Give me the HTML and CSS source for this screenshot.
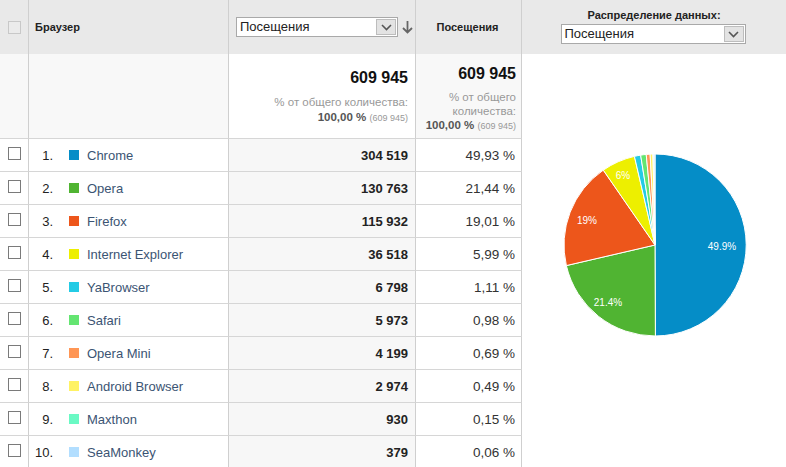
FILE: index.html
```html
<!DOCTYPE html>
<html lang="ru">
<head>
<meta charset="utf-8">
<link rel="stylesheet" href="styles.css">
</head>
<body>
<div class="report">
  <div class="table">
    <div class="cell hcheck"><span class="cb cb-head"></span></div>
    <div class="cell hname">Браузер</div>
    <div class="cell hvisits">
      <div class="select sel-metric"><span class="sel-text">Посещения</span><span class="sel-btn"><svg width="11" height="7" viewBox="0 0 11 7"><path d="M1 1 L5.5 5.5 L10 1" fill="none" stroke="#555" stroke-width="1.6"/></svg></span></div>
      <svg class="sort" width="11" height="13" viewBox="0 0 11 13"><path d="M5.5 0 V11 M1 7 L5.5 11.5 L10 7" fill="none" stroke="#666" stroke-width="1.8"/></svg>
    </div>
    <div class="cell hpct">Посещения</div>

    <div class="cell tcheck"></div>
    <div class="cell tname"></div>
    <div class="cell tvisits">
      <div class="big">609 945</div>
      <div class="sub">% от общего количества:</div>
      <div class="sub"><b>100,00 %</b> <small>(609 945)</small></div>
    </div>
    <div class="cell tpct">
      <div class="big">609 945</div>
      <div class="sub">% от общего количества:</div>
      <div class="sub"><b>100,00 %</b> <small>(609 945)</small></div>
    </div>

    <div class="cell rcheck"><span class="cb"></span></div>
    <div class="cell rname"><span class="num">1.</span><span class="sw c1"></span><span class="link">Chrome</span></div>
    <div class="cell rvisits">304 519</div>
    <div class="cell rpct">49,93 %</div>

    <div class="cell rcheck"><span class="cb"></span></div>
    <div class="cell rname"><span class="num">2.</span><span class="sw c2"></span><span class="link">Opera</span></div>
    <div class="cell rvisits">130 763</div>
    <div class="cell rpct">21,44 %</div>

    <div class="cell rcheck"><span class="cb"></span></div>
    <div class="cell rname"><span class="num">3.</span><span class="sw c3"></span><span class="link">Firefox</span></div>
    <div class="cell rvisits">115 932</div>
    <div class="cell rpct">19,01 %</div>

    <div class="cell rcheck"><span class="cb"></span></div>
    <div class="cell rname"><span class="num">4.</span><span class="sw c4"></span><span class="link">Internet Explorer</span></div>
    <div class="cell rvisits">36 518</div>
    <div class="cell rpct">5,99 %</div>

    <div class="cell rcheck"><span class="cb"></span></div>
    <div class="cell rname"><span class="num">5.</span><span class="sw c5"></span><span class="link">YaBrowser</span></div>
    <div class="cell rvisits">6 798</div>
    <div class="cell rpct">1,11 %</div>

    <div class="cell rcheck"><span class="cb"></span></div>
    <div class="cell rname"><span class="num">6.</span><span class="sw c6"></span><span class="link">Safari</span></div>
    <div class="cell rvisits">5 973</div>
    <div class="cell rpct">0,98 %</div>

    <div class="cell rcheck"><span class="cb"></span></div>
    <div class="cell rname"><span class="num">7.</span><span class="sw c7"></span><span class="link">Opera Mini</span></div>
    <div class="cell rvisits">4 199</div>
    <div class="cell rpct">0,69 %</div>

    <div class="cell rcheck"><span class="cb"></span></div>
    <div class="cell rname"><span class="num">8.</span><span class="sw c8"></span><span class="link">Android Browser</span></div>
    <div class="cell rvisits">2 974</div>
    <div class="cell rpct">0,49 %</div>

    <div class="cell rcheck"><span class="cb"></span></div>
    <div class="cell rname"><span class="num">9.</span><span class="sw c9"></span><span class="link">Maxthon</span></div>
    <div class="cell rvisits">930</div>
    <div class="cell rpct">0,15 %</div>

    <div class="cell rcheck"><span class="cb"></span></div>
    <div class="cell rname"><span class="num">10.</span><span class="sw c10"></span><span class="link">SeaMonkey</span></div>
    <div class="cell rvisits">379</div>
    <div class="cell rpct">0,06 %</div>
  </div>

  <div class="chart">
    <div class="chart-head">
      <div class="chart-title">Распределение данных:</div>
      <div class="select sel-dist"><span class="sel-text">Посещения</span><span class="sel-btn"><svg width="11" height="7" viewBox="0 0 11 7"><path d="M1 1 L5.5 5.5 L10 1" fill="none" stroke="#555" stroke-width="1.6"/></svg></span></div>
    </div>
    <div class="chart-body">
      <svg class="pie" width="184" height="184" viewBox="0 0 184 184">
        <g stroke="#fff" stroke-width="1" stroke-linejoin="round">
          <path fill="#058dc7" d="M92 92 L92 1 A91 91 0 0 1 92.40 183 Z"/>
          <path fill="#50b432" d="M92 92 L92.40 183 A91 91 0 0 1 3.36 112.58 Z"/>
          <path fill="#ed561b" d="M92 92 L3.36 112.58 A91 91 0 0 1 40.29 17.12 Z"/>
          <path fill="#edef00" d="M92 92 L40.29 17.12 A91 91 0 0 1 71.42 3.36 Z"/>
          <path fill="#24cbe5" d="M92 92 L71.42 3.36 A91 91 0 0 1 77.65 2.14 Z"/>
          <path fill="#64e572" d="M92 92 L77.65 2.14 A91 91 0 0 1 83.21 1.43 Z"/>
          <path fill="#ff9655" d="M92 92 L83.21 1.43 A91 91 0 0 1 87.14 1.13 Z"/>
          <path fill="#fff263" d="M92 92 L87.14 1.13 A91 91 0 0 1 89.94 1.02 Z"/>
          <path fill="#6af9c4" d="M92 92 L89.94 1.02 A91 91 0 0 1 90.80 1.01 Z"/>
          <path fill="#b2deff" d="M92 92 L90.80 1.01 A91 91 0 0 1 92 1 Z"/>
        </g>
        <g class="pie-label">
          <text x="159" y="97" text-anchor="middle">49.9%</text>
          <text x="45" y="153" text-anchor="middle">21.4%</text>
          <text x="24" y="71" text-anchor="middle">19%</text>
          <text x="60" y="26" text-anchor="middle">6%</text>
        </g>
      </svg>
    </div>
  </div>
</div>
</body>
</html>
```

FILE: styles.css
```css
* { box-sizing: border-box; }
html, body { margin: 0; padding: 0; background: #fff; }
body {
  font-family: "Liberation Sans", Arial, sans-serif;
  color: #333;
  width: 786px;
  height: 467px;
  overflow: hidden;
}
.report {
  display: flex;
  align-items: flex-start;
}
.table {
  display: grid;
  grid-template-columns: 29px 200px 187px 106px;
  grid-auto-rows: 33px;
  grid-template-rows: 54px 85px;
}
.cell {
  border-right: 1px solid #cfcfcf;
  display: flex;
  align-items: center;
}
/* header */
.hcheck, .hname, .hvisits, .hpct { background: #e9e9e9; }
.hcheck { justify-content: flex-start; padding-left: 8px; }
.hname { padding-left: 6px; font-size: 11px; font-weight: bold; color: #222; }
.hvisits { padding-left: 7px; gap: 4px; }
.hpct { justify-content: center; font-size: 11px; font-weight: bold; color: #222; padding-right: 2px; }

.cb {
  display: block;
  width: 13px;
  height: 13px;
  border: 1px solid #7a7a7a;
  background: #fff;
}
.cb-head { border-color: #c8c8c8; background: #ebebeb; }

.select {
  display: flex;
  align-items: stretch;
  height: 20px;
  border: 1px solid #a9a9a9;
  background: #fff;
  font-size: 13px;
  color: #222;
}
.sel-text { flex: 1; padding-left: 3px; line-height: 18px; }
.sel-btn {
  width: 20px;
  margin: 1px;
  background: #e3e3e3;
  border: 1px solid #bdbdbd;
  display: flex;
  align-items: center;
  justify-content: center;
}
.sel-metric { width: 162px; }
.sort { display: block; margin-top: 1px; }

/* totals */
.tcheck, .tname { background: #f8f8f8; border-bottom: 1px solid #d6d6d6; }
.tvisits, .tpct {
  flex-direction: column;
  align-items: flex-end;
  justify-content: flex-start;
  border-bottom: 1px solid #d6d6d6;
  text-align: right;
}
.tvisits { background: #fff; padding: 14px 7px 0 0; }
.tpct { background: #f8f8f8; padding: 10px 5px 0 8px; }
.big { font-size: 16px; font-weight: bold; color: #111; line-height: 20px; }
.tvisits .big { margin-bottom: 7px; }
.tpct .big { margin-bottom: 6px; }
.sub { font-size: 11.5px; color: #999; line-height: 14px; }
.tvisits .sub { line-height: 15px; }
.sub b { color: #555; }
.sub small { font-size: 9px; color: #999; }

/* rows */
.rcheck, .rname, .rvisits, .rpct { border-bottom: 1px solid #d6d6d6; }
.rcheck { padding-left: 8px; padding-bottom: 3px; background: #fff; }
.rname { font-size: 13px; background: #fff; }
.num { width: 24px; text-align: right; color: #222; }
.sw { width: 10px; height: 10px; margin-left: 16px; margin-right: 8px; }
.link { color: #3b5473; }
.c1 { background: #058dc7; }
.c2 { background: #50b432; }
.c3 { background: #ed561b; }
.c4 { background: #edef00; }
.c5 { background: #24cbe5; }
.c6 { background: #64e572; }
.c7 { background: #ff9655; }
.c8 { background: #fff263; }
.c9 { background: #6af9c4; }
.c10 { background: #b2deff; }
.rvisits {
  justify-content: flex-end;
  padding-right: 7px;
  background: #f7f7f7;
  font-size: 13px;
  font-weight: bold;
  color: #222;
}
.rpct {
  justify-content: flex-end;
  padding-right: 6px;
  font-size: 13.5px;
  color: #333;
  background: #fff;
}

/* chart */
.chart { flex: 1; display: flex; flex-direction: column; }
.chart-head {
  height: 54px;
  background: #e9e9e9;
  display: flex;
  flex-direction: column;
  align-items: center;
  padding-top: 9px;
  gap: 2px;
}
.chart-title { font-size: 11px; font-weight: bold; color: #222; line-height: 13px; }
.sel-dist { width: 185px; margin-right: 2px; }
.chart-body { padding: 99px 0 0 41px; }
.pie { display: block; }
.pie-label text {
  fill: #fff;
  font-size: 10px;
  font-family: "Liberation Sans", Arial, sans-serif;
}
```
